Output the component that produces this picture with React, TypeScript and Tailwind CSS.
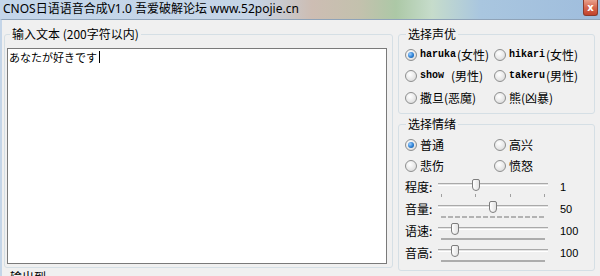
import React from 'react';

function Radio({ checked, label }: { checked?: boolean; label: React.ReactNode }) {
  return (
    <div className="flex items-center h-full">
      <span className="w-[12px] h-[12px] rounded-full border border-[#8e8f8f] bg-[radial-gradient(circle_at_40%_35%,#ffffff_0%,#e6e6e6_60%,#cfcfcf_100%)] flex items-center justify-center shrink-0">
        {checked && (
          <span className="w-[6px] h-[6px] rounded-full bg-[radial-gradient(circle_at_35%_35%,#9fd0ff_0%,#2a7fd4_55%,#0b4f96_100%)]" />
        )}
      </span>
      <span className="ml-[3px] whitespace-nowrap leading-none">{label}</span>
    </div>
  );
}

function Voice({ en, zh }: { en: string; zh: string }) {
  return (
    <span className="flex items-center">
      <span className="[font-family:'Liberation_Mono',monospace] text-[10px] font-semibold whitespace-pre">{en}</span>
      <span className="text-[12px] ml-[1px]">({zh})</span>
    </span>
  );
}

function Slider({ label, value, pos, under }: { label: string; value: string; pos: number; under: 'ticks' | 'dashed' | 'bar' }) {
  return (
    <div className="flex h-[22px]">
      <span className="w-[33px] pt-[4px] text-[12px] leading-[14px]">{label}</span>
      <div className="relative w-[110px]">
        {/* track */}
        <div className="mt-[7px] h-[3px] border-t border-[#a9a9a9] border-b border-b-white bg-[#e4e4e4]" />
        {/* under row */}
        <div className="mt-[8px] px-[3px]">
          {under === 'ticks' && (
            <div className="flex justify-between">
              <span className="w-[1px] h-[3px] bg-[#a0a0a0]" />
              <span className="w-[1px] h-[3px] bg-[#a0a0a0]" />
              <span className="w-[1px] h-[3px] bg-[#a0a0a0]" />
              <span className="w-[1px] h-[3px] bg-[#a0a0a0]" />
            </div>
          )}
          {under === 'dashed' && (
            <div className="h-[2px] bg-[repeating-linear-gradient(90deg,#b2b2b2_0_5px,transparent_5px_7px)]" />
          )}
          {under === 'bar' && <div className="h-[2px] bg-[#adadad]" />}
        </div>
        {/* thumb */}
        <span
          className="absolute top-[3px] w-[8px] h-[12px] rounded-[2px] rounded-b-[4px] border border-[#7d7d7d] bg-[linear-gradient(90deg,#ffffff,#e3e3e3)]"
          style={{ left: 3 + pos * 104 - 4 }}
        />
      </div>
      <span className="ml-[12px] pt-[5px] [font-family:'Liberation_Sans',sans-serif] text-[11px] leading-[12px]">{value}</span>
    </div>
  );
}

export default function App() {
  return (
    <div className="w-[600px] h-[276px] overflow-hidden bg-[#f0f0f0] text-black [font-family:'Noto_Sans_CJK_SC',sans-serif]">
      {/* Title bar */}
      <div className="h-[19px] flex items-start justify-between pl-[3px] pr-[2px] bg-[linear-gradient(90deg,#c4d6ea_0%,#c5d5e7_42%,#cdbdb3_52%,#c3c1ad_60%,#acc8a6_66%,#c6dccb_72%,#a9c6df_80%,#9fbddd_100%)]">
        <span className="mt-[1px] text-[12px] leading-[16px] [font-family:'Noto_Sans','Noto_Sans_CJK_SC',sans-serif] whitespace-nowrap">
          CNOS日语语音合成V1.0 吾爱破解论坛 www.52pojie.cn
        </span>
        <span className="w-[15px] h-[16px] flex items-center justify-center rounded-b-[3px] border border-[#8b3a2c] border-t-0 bg-[linear-gradient(180deg,#e9a08c_0%,#d6674f_50%,#c2432c_100%)] text-white text-[10px] leading-none font-bold [font-family:'DejaVu_Sans',sans-serif]">
          x
        </span>
      </div>

      {/* Body */}
      <div className="flex border-t border-[#8fa3b8] border-l-2 border-l-[#c4d5e8] pl-[2px] pt-[7px]">
        {/* Left column */}
        <div className="w-[389px] flex flex-col">
          <fieldset className="h-[241px] border border-[#d5dfe5] rounded-[3px] pl-[2px] pr-[5px]">
            <legend className="ml-[3px] px-[2px] text-[12px] leading-[14px]">输入文本 (200字符以内)</legend>
            <div className="mt-[7px] h-[216px] border border-[#7a7a7a] bg-white pl-[1px] pt-[2px] flex items-start text-[11px] leading-[13px]">
              <span className="[font-family:'Noto_Sans_CJK_JP',sans-serif]">あなたが好きです</span>
              <span className="w-[1px] h-[12px] bg-black ml-[2px]" />
            </div>
          </fieldset>
          <fieldset className="mt-[2px] h-[30px] border border-[#d5dfe5] rounded-[3px]">
            <legend className="ml-[3px] px-[2px] text-[12px] leading-[14px]">输出到</legend>
          </fieldset>
        </div>

        {/* Right column */}
        <div className="ml-[5px] w-[197px] flex flex-col">
          <fieldset className="h-[87px] border border-[#d5dfe5] rounded-[3px] pl-[6px]">
            <legend className="ml-[1px] px-[2px] text-[12px] leading-[14px]">选择声优</legend>
            <div className="grid grid-cols-[89px_1fr] grid-rows-[21px_22px_22px] mt-[3px] text-[12px]">
              <Radio checked label={<Voice en="haruka" zh="女性" />} />
              <Radio label={<Voice en="hikari" zh="女性" />} />
              <Radio label={<Voice en="show " zh="男性" />} />
              <Radio label={<Voice en="takeru" zh="男性" />} />
              <Radio label={<span className="text-[12px]">撒旦(恶魔)</span>} />
              <Radio label={<span className="text-[12px]">熊(凶暴)</span>} />
            </div>
          </fieldset>

          <fieldset className="mt-[3px] h-[154px] border border-[#d5dfe5] rounded-[3px] pl-[6px]">
            <legend className="ml-[1px] px-[2px] text-[12px] leading-[14px]">选择情绪</legend>
            <div className="grid grid-cols-[89px_1fr] grid-rows-[21px_21px] mt-[3px] text-[12px]">
              <Radio checked label="普通" />
              <Radio label="高兴" />
              <Radio label="悲伤" />
              <Radio label="愤怒" />
            </div>
            <div className="flex flex-col">
              <Slider label="程度:" value="1" pos={1 / 3} under="ticks" />
              <Slider label="音量:" value="50" pos={0.5} under="dashed" />
              <Slider label="语速:" value="100" pos={0.13} under="bar" />
              <Slider label="音高:" value="100" pos={0.13} under="bar" />
            </div>
          </fieldset>
        </div>
      </div>
    </div>
  );
}
